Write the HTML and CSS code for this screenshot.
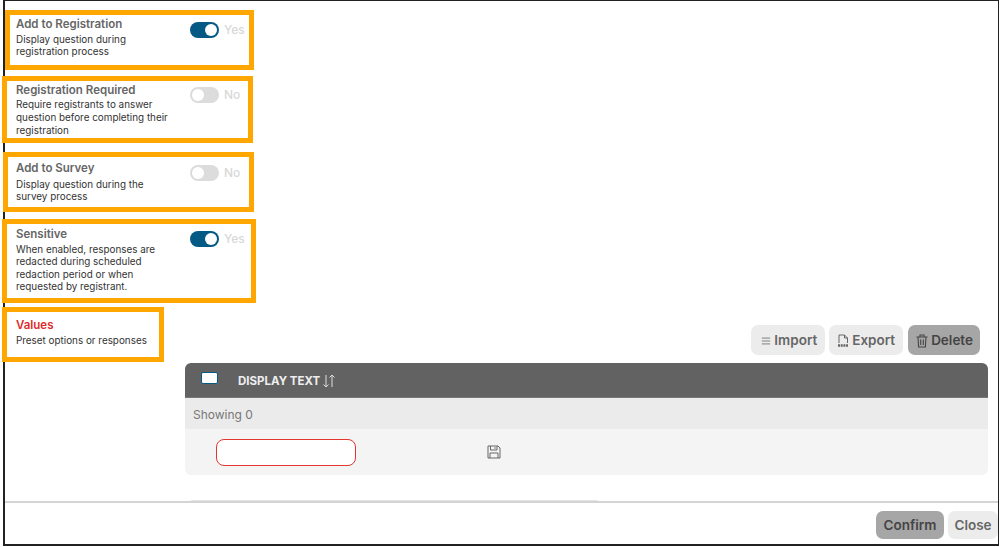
FILE: index.html
```html
<!DOCTYPE html>
<html lang="en">
<head>
<meta charset="utf-8">
<title>Question settings</title>
<link rel="stylesheet" href="styles.css">
</head>
<body>
<div class="frame">
  <div class="main">
    <aside class="side">
      <section class="opt opt-reg">
        <div class="opt-text"><h3>Add to Registration</h3><p>Display question during registration process</p></div>
        <div class="toggle-wrap"><span class="toggle on"></span><span class="state">Yes</span></div>
      </section>
      <section class="opt opt-req">
        <div class="opt-text"><h3>Registration Required</h3><p>Require registrants to answer question before completing their registration</p></div>
        <div class="toggle-wrap"><span class="toggle"></span><span class="state">No</span></div>
      </section>
      <section class="opt opt-sur">
        <div class="opt-text"><h3>Add to Survey</h3><p>Display question during the survey process</p></div>
        <div class="toggle-wrap"><span class="toggle"></span><span class="state">No</span></div>
      </section>
      <section class="opt opt-sen">
        <div class="opt-text"><h3>Sensitive</h3><p>When enabled, responses are redacted during scheduled redaction period or when requested by registrant.</p></div>
        <div class="toggle-wrap"><span class="toggle on"></span><span class="state">Yes</span></div>
      </section>
      <section class="opt opt-val">
        <div class="opt-text"><h3 class="err">Values</h3><p>Preset options or responses</p></div>
      </section>
    </aside>
    <div class="content">
      <div class="toolbar">
        <button class="btn light imp">
          <svg class="ic-small" viewBox="0 0 12 12"><path d="M1 2.500h10M1 6h10M1 9.500h10" fill="none" stroke="#777" stroke-width="1.100"/></svg>Import
        </button>
        <button class="btn light exp">
          <svg class="ic" viewBox="0 0 12 14"><path d="M2 9V1h5.500L10.500 4v5M7.500 1v3h3" fill="none" stroke="#666" stroke-width="1"/><path d="M1 11.500h10" fill="none" stroke="#666" stroke-width="2.500" stroke-dasharray="2 .7"/></svg>Export
        </button>
        <button class="btn dark del">
          <svg class="ic" viewBox="0 0 12 14"><path d="M.5 3h11M4 3V1h4v2M2 3l.6 10h6.800L10 3M4.700 5.500v5.500M7.300 5.500v5.500" fill="none" stroke="#444" stroke-width="1.100"/></svg>Delete
        </button>
      </div>
      <div class="table">
        <div class="thead">
          <span class="check"></span>
          <span class="th">DISPLAY TEXT</span>
          <svg class="sort" viewBox="0 0 14 14"><path d="M4 1v12M1.500 10.500 4 13l2.500-2.500M10 13V1M7.500 3.500 10 1l2.500 2.500" fill="none" stroke="#ddd" stroke-width="1"/></svg>
        </div>
        <div class="showing">Showing 0</div>
        <div class="row">
          <input class="field" type="text" aria-label="Display text">
          <svg class="save" viewBox="0 0 14 14"><path d="M1 1h10l2 2v10H1zM3.500 1v4h6.500V1M8 2.200v1.600M3 13V8h8v5" fill="none" stroke="#666" stroke-width="1"/></svg>
        </div>
      </div>
      <div class="cut"></div>
    </div>
  </div>
  <footer class="foot">
    <button class="btn dark conf">Confirm</button>
    <button class="btn light close">Close</button>
  </footer>
</div>
</body>
</html>
```
FILE: styles.css
```css
* { box-sizing: border-box; }
html, body { margin: 0; padding: 0; background: #fff; }
body { width: 1000px; height: 547px; overflow: hidden; font-family: Inter, "Liberation Sans", sans-serif; }
.frame {
  width: 996px; height: 546px; margin-left: 3px;
  border: 1px solid #222; border-left-width: 2px; border-bottom-width: 2px;
  display: flex; flex-direction: column; background: #fff;
}
.main { flex: 0 0 500px; display: flex; overflow: hidden; margin-left: -5px; }
.side { flex: 0 0 182px; width: 182px; padding-top: 9px; position: relative; z-index: 1; }
.opt {
  border: 5px solid #ffa600; display: flex; background: #fff; color: #333;
  width: 251px;
}
.opt-text { width: 164px; flex: none; padding-left: 6px; }
.opt h3 { margin: 0; font-size: 11.5px; line-height: 15px; font-weight: 600; color: #666; }
.opt h3.err { color: #e02b2b; }
.opt p { margin: 0; font-size: 9.9px; line-height: 12.4px; color: #333; }
.toggle-wrap { display: flex; gap: 5px; align-items: flex-start; margin-left: 16px; }
.toggle { width: 29px; height: 16px; border-radius: 8px; background: #dcdcdc; position: relative; display: block; flex: none; }
.toggle::after { content: ""; position: absolute; top: 2px; left: 2px; width: 12px; height: 12px; border-radius: 50%; background: #fff; }
.toggle.on { background: #045a84; }
.toggle.on::after { left: 15px; }
.state { font-size: 12px; line-height: 15px; color: #d8d8d8; font-weight: 500; }

.opt-reg { margin-left: 5px; height: 60px; padding-top: 2px; width: 249px; }
.opt-reg p { margin-top: 1px; }
.opt-reg .toggle-wrap { padding-top: 5px; }
.opt-req { margin-left: 2px; margin-top: 6px; height: 67px; padding-top: 2px; }
.opt-req .opt-text { width: 167px; padding-left: 9px; }
.opt-req p { line-height: 12.8px; }
.opt-req .toggle-wrap { padding-top: 4px; }
.opt-sur { margin-left: 3px; margin-top: 9px; height: 60px; padding-top: 4px; }
.opt-sur .opt-text { width: 166px; padding-left: 8px; }
.opt-sur p { margin-top: 2px; }
.opt-sur .toggle-wrap { padding-top: 4px; }
.opt-sen { margin-left: 2px; margin-top: 7px; height: 84px; width: 254px; padding-top: 3px; }
.opt-sen .opt-text { width: 167px; padding-left: 9px; }
.opt-sen p { margin-top: 1px; }
.opt-sen .toggle-wrap { padding-top: 4px; }
.opt-val { margin-left: 2px; margin-top: 4px; height: 55px; width: 162px; padding-top: 6px; }
.opt-val .opt-text { width: 150px; padding-left: 9px; }
.opt-val p { margin-top: 1px; }

.content { flex: 1; min-width: 0; padding: 324px 10px 0 3px; }
.toolbar { display: flex; justify-content: flex-end; gap: 4px; padding-right: 8px; height: 30px; }
.btn {
  border: 0; border-radius: 7px; height: 30px; padding: 2px 8px 0; font: 600 13.5px/1 Inter, "Liberation Sans", sans-serif;
  color: #666; display: inline-flex; align-items: center; gap: 3px; background: #ececec;
}
.btn.dark { background: #a6a6a6; color: #444; }
.btn .ic { width: 12px; height: 14px; flex: none; }
.btn .ic-small { width: 10px; height: 10px; flex: none; }
.imp { padding-left: 10px; }
.del { margin-left: 1px; padding: 2px 7px 0 8px; }
.table { margin-top: 8px; width: 803px; border-radius: 6px; overflow: hidden; background: #f4f4f4; }
.thead { height: 35px; padding-top: 1px; background: #626262; border-bottom: 1px solid #777; display: flex; align-items: center; color: #eee; }
.check { width: 17px; height: 12px; background: #fff; border: 1px solid #045a84; border-radius: 2px; margin-left: 16px; margin-top: -5px; }
.th { font-size: 11.500px; font-weight: 700; margin-left: 20px; }
.sort { width: 14px; height: 14px; margin-left: 2px; }
.showing { height: 31px; background: #ebebeb; font-size: 12px; line-height: 33px; color: #777; padding-left: 8px; }
.row { height: 46px; display: flex; align-items: center; padding-left: 31px; }
.field { width: 140px; height: 27px; border: 1px solid #e2362e; border-radius: 8px; background: #fff; padding: 0; outline: 0; }
.save { width: 14px; height: 14px; margin-left: 131px; }
.cut { width: 411px; height: 4px; margin: 25px 0 0 4px; background: #e4e4e4; border-radius: 4px 4px 0 0; }

.foot { flex: 1; border-top: 2px solid #d4d4d4; display: flex; justify-content: flex-end; align-items: flex-start; gap: 4px; padding-top: 8px; }
.foot .btn { height: 28px; justify-content: center; }
.conf { width: 68px; }
.close { width: 50px; }
```
